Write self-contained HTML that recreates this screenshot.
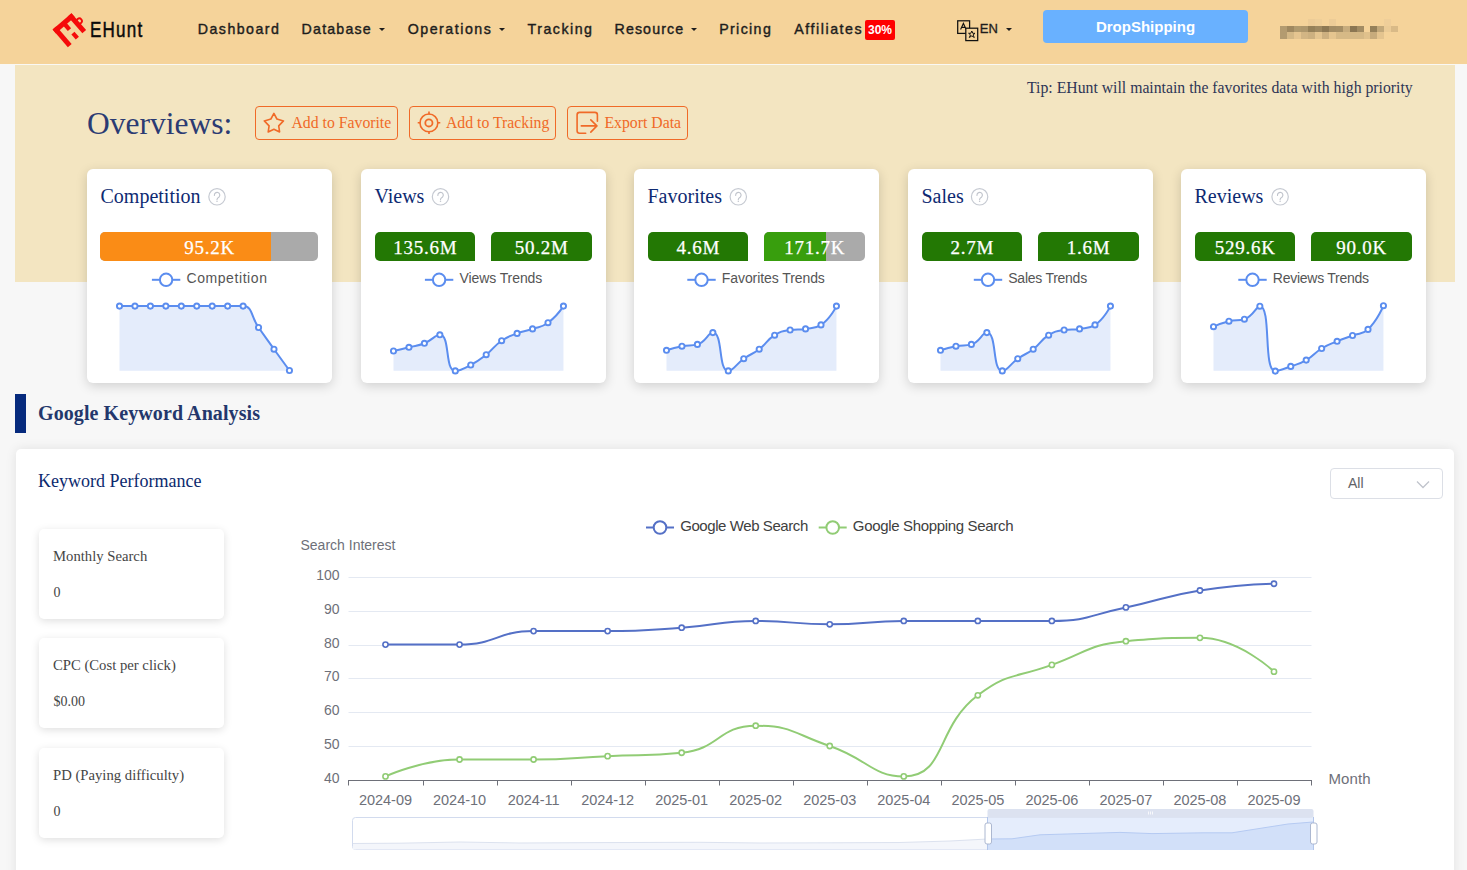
<!DOCTYPE html><html><head><meta charset="utf-8"><style>
html,body{margin:0;padding:0;}
body{width:1467px;height:870px;overflow:hidden;position:relative;background:#F7F7F7;font-family:"Liberation Sans",sans-serif;}
.t{position:absolute;white-space:nowrap;line-height:1;}
</style></head><body>
<div style="position:absolute;left:0px;top:0px;width:1467px;height:64px;background:#F5D39A;"></div>
<div style="position:absolute;left:0px;top:64px;width:1467px;height:1px;background:#F9F8F4;"></div>
<div style="position:absolute;left:15px;top:65px;width:1440px;height:217px;background:#F3E5C1;"></div>
<svg style="position:absolute;left:0;top:0" width="160" height="60">
<g transform="matrix(0.756,-0.655,0.655,0.756,52.6,29.6)" fill="#F50A0A">
<rect x="0" y="0" width="25" height="5"/>
<rect x="20" y="0" width="5" height="22.3"/>
<rect x="0" y="0" width="5" height="23.3"/>
<rect x="10.6" y="4" width="4.3" height="7"/>
<rect x="11" y="16" width="4.1" height="6.7"/>
<circle cx="25.8" cy="11" r="2.6" fill="none" stroke="#F50A0A" stroke-width="1.8"/>
</g>
</svg>
<div class="t" style="left:90.20px;top:19.34px;font-size:22.4px;font-family:'Liberation Sans', sans-serif;color:#0a0a0a;font-weight:normal;letter-spacing:1.6px;transform:scaleX(0.76);transform-origin:0 0;-webkit-text-stroke:0.5px #0a0a0a;">EHunt</div>
<div class="t" style="left:197.80px;top:21.88px;font-size:14.2px;font-family:'Liberation Sans', sans-serif;color:#1d1d1d;font-weight:normal;letter-spacing:1.45px;-webkit-text-stroke:0.4px #1d1d1d;">Dashboard</div>
<div class="t" style="left:301.60px;top:21.88px;font-size:14.2px;font-family:'Liberation Sans', sans-serif;color:#1d1d1d;font-weight:normal;letter-spacing:1.2px;-webkit-text-stroke:0.4px #1d1d1d;">Database</div>
<div class="t" style="left:407.70px;top:21.88px;font-size:14.2px;font-family:'Liberation Sans', sans-serif;color:#1d1d1d;font-weight:normal;letter-spacing:1.53px;-webkit-text-stroke:0.4px #1d1d1d;">Operations</div>
<div class="t" style="left:527.60px;top:21.88px;font-size:14.2px;font-family:'Liberation Sans', sans-serif;color:#1d1d1d;font-weight:normal;letter-spacing:1.49px;-webkit-text-stroke:0.4px #1d1d1d;">Tracking</div>
<div class="t" style="left:614.50px;top:21.88px;font-size:14.2px;font-family:'Liberation Sans', sans-serif;color:#1d1d1d;font-weight:normal;letter-spacing:1.13px;-webkit-text-stroke:0.4px #1d1d1d;">Resource</div>
<div class="t" style="left:719.20px;top:21.88px;font-size:14.2px;font-family:'Liberation Sans', sans-serif;color:#1d1d1d;font-weight:normal;letter-spacing:1.37px;-webkit-text-stroke:0.4px #1d1d1d;">Pricing</div>
<div class="t" style="left:794.30px;top:21.88px;font-size:14.2px;font-family:'Liberation Sans', sans-serif;color:#1d1d1d;font-weight:normal;letter-spacing:1.55px;-webkit-text-stroke:0.4px #1d1d1d;">Affiliates</div>
<div style="position:absolute;left:379px;top:28px;width:0;height:0;border-left:3px solid transparent;border-right:3px solid transparent;border-top:3px solid #1d1d1d;"></div>
<div style="position:absolute;left:499px;top:28px;width:0;height:0;border-left:3px solid transparent;border-right:3px solid transparent;border-top:3px solid #1d1d1d;"></div>
<div style="position:absolute;left:691px;top:28px;width:0;height:0;border-left:3px solid transparent;border-right:3px solid transparent;border-top:3px solid #1d1d1d;"></div>
<div style="position:absolute;left:1006px;top:28px;width:0;height:0;border-left:3px solid transparent;border-right:3px solid transparent;border-top:3px solid #1d1d1d;"></div>
<div style="position:absolute;left:865px;top:20px;width:30px;height:19.5px;background:#F00;border-radius:2px;"></div>
<div class="t" style="left:580.00px;width:600px;text-align:center;top:24.14px;font-size:12px;font-family:'Liberation Sans', sans-serif;color:#fff;font-weight:bold;letter-spacing:0px;">30%</div>
<svg style="position:absolute;left:950px;top:15px" width="32" height="30">
<rect x="7.7" y="5.8" width="11.9" height="12.6" fill="none" stroke="#111" stroke-width="1.25"/>
<path d="M10.6,14.6 L13.4,8.4 L16.2,14.6 M11.6,12.4 H15.2" fill="none" stroke="#111" stroke-width="1.1"/>
<rect x="15.8" y="13.2" width="11.9" height="12.4" fill="#F5D39A" stroke="#111" stroke-width="1.25"/>
<path d="M21.8,16 L22.8,18.3 L25,18.3 L23.1,19.9 L24.3,22.5 L21.8,20.9 L19.3,22.5 L20.5,19.9 L18.6,18.3 L20.8,18.3 Z" fill="none" stroke="#111" stroke-width="1"/>
</svg>
<div class="t" style="left:979.80px;top:22.40px;font-size:13px;font-family:'Liberation Sans', sans-serif;color:#1d1d1d;font-weight:normal;letter-spacing:0px;-webkit-text-stroke:0.3px #1d1d1d;">EN</div>
<div style="position:absolute;left:1043px;top:10px;width:205px;height:33px;background:#69B1FF;border-radius:4px;"></div>
<div class="t" style="left:845.50px;width:600px;text-align:center;top:18.80px;font-size:15px;font-family:'Liberation Sans', sans-serif;color:#fff;font-weight:bold;letter-spacing:0px;">DropShipping</div>
<div style="position:absolute;left:1307.84px;top:19.0px;width:7px;height:6.75px;background:#EDCC97;"></div>
<div style="position:absolute;left:1314.8px;top:19.0px;width:7px;height:6.75px;background:#EFCF99;"></div>
<div style="position:absolute;left:1328.72px;top:19.0px;width:7px;height:6.75px;background:#EDCC97;"></div>
<div style="position:absolute;left:1384.4px;top:19.0px;width:7px;height:6.75px;background:#EFCE99;"></div>
<div style="position:absolute;left:1280.0px;top:25.68px;width:7px;height:6.75px;background:#B39B70;"></div>
<div style="position:absolute;left:1286.96px;top:25.68px;width:7px;height:6.75px;background:#9F8860;"></div>
<div style="position:absolute;left:1293.92px;top:25.68px;width:7px;height:6.75px;background:#B09A6E;"></div>
<div style="position:absolute;left:1300.88px;top:25.68px;width:7px;height:6.75px;background:#AE976C;"></div>
<div style="position:absolute;left:1307.84px;top:25.68px;width:7px;height:6.75px;background:#958058;"></div>
<div style="position:absolute;left:1314.8px;top:25.68px;width:7px;height:6.75px;background:#9E8860;"></div>
<div style="position:absolute;left:1321.76px;top:25.68px;width:7px;height:6.75px;background:#8D7853;"></div>
<div style="position:absolute;left:1328.72px;top:25.68px;width:7px;height:6.75px;background:#A38C63;"></div>
<div style="position:absolute;left:1335.68px;top:25.68px;width:7px;height:6.75px;background:#A58E65;"></div>
<div style="position:absolute;left:1342.64px;top:25.68px;width:7px;height:6.75px;background:#C7AC7D;"></div>
<div style="position:absolute;left:1349.6px;top:25.68px;width:7px;height:6.75px;background:#8B7652;"></div>
<div style="position:absolute;left:1356.56px;top:25.68px;width:7px;height:6.75px;background:#A38C63;"></div>
<div style="position:absolute;left:1370.48px;top:25.68px;width:7px;height:6.75px;background:#958059;"></div>
<div style="position:absolute;left:1377.44px;top:25.68px;width:7px;height:6.75px;background:#C2A87A;"></div>
<div style="position:absolute;left:1384.4px;top:25.68px;width:7px;height:6.75px;background:#EBCB96;"></div>
<div style="position:absolute;left:1391.36px;top:25.68px;width:7px;height:6.75px;background:#D9BA87;"></div>
<div style="position:absolute;left:1280.0px;top:32.36px;width:7px;height:6.75px;background:#B39B70;"></div>
<div style="position:absolute;left:1286.96px;top:32.36px;width:7px;height:6.75px;background:#D4B886;"></div>
<div style="position:absolute;left:1293.92px;top:32.36px;width:7px;height:6.75px;background:#E5C590;"></div>
<div style="position:absolute;left:1300.88px;top:32.36px;width:7px;height:6.75px;background:#D2B584;"></div>
<div style="position:absolute;left:1307.84px;top:32.36px;width:7px;height:6.75px;background:#CCB080;"></div>
<div style="position:absolute;left:1314.8px;top:32.36px;width:7px;height:6.75px;background:#E4C590;"></div>
<div style="position:absolute;left:1321.76px;top:32.36px;width:7px;height:6.75px;background:#CDB080;"></div>
<div style="position:absolute;left:1328.72px;top:32.36px;width:7px;height:6.75px;background:#E5C58F;"></div>
<div style="position:absolute;left:1335.68px;top:32.36px;width:7px;height:6.75px;background:#D6B986;"></div>
<div style="position:absolute;left:1342.64px;top:32.36px;width:7px;height:6.75px;background:#D6B986;"></div>
<div style="position:absolute;left:1349.6px;top:32.36px;width:7px;height:6.75px;background:#D6B986;"></div>
<div style="position:absolute;left:1356.56px;top:32.36px;width:7px;height:6.75px;background:#D6B986;"></div>
<div style="position:absolute;left:1363.52px;top:32.36px;width:7px;height:6.75px;background:#E0C18C;"></div>
<div style="position:absolute;left:1370.48px;top:32.36px;width:7px;height:6.75px;background:#C7AB7C;"></div>
<div style="position:absolute;left:1377.44px;top:32.36px;width:7px;height:6.75px;background:#E4C48F;"></div>
<div class="t" style="left:87.00px;top:107.92px;font-size:31.5px;font-family:'Liberation Serif', serif;color:#2B3B73;font-weight:normal;letter-spacing:0px;">Overviews:</div>
<div style="position:absolute;left:255px;top:106px;width:141px;height:32px;border:1px solid #F06A28;border-radius:4px;"></div>
<div class="t" style="left:291.50px;top:115.41px;font-size:15.75px;font-family:'Liberation Serif', serif;color:#F06A28;font-weight:normal;letter-spacing:0px;">Add to Favorite</div>
<div style="position:absolute;left:409px;top:106px;width:145px;height:32px;border:1px solid #F06A28;border-radius:4px;"></div>
<div class="t" style="left:446.00px;top:115.41px;font-size:15.75px;font-family:'Liberation Serif', serif;color:#F06A28;font-weight:normal;letter-spacing:0px;">Add to Tracking</div>
<div style="position:absolute;left:567px;top:106px;width:119px;height:32px;border:1px solid #F06A28;border-radius:4px;"></div>
<div class="t" style="left:604.50px;top:115.41px;font-size:15.75px;font-family:'Liberation Serif', serif;color:#F06A28;font-weight:normal;letter-spacing:0px;">Export Data</div>
<svg style="position:absolute;left:0;top:0" width="700" height="150" fill="none" stroke="#F06A28" stroke-width="1.6" stroke-linejoin="round">
<path d="M273.9,113.4 L276.9,119 L283.5,120.9 L278.7,125.9 L279.6,131.9 L273.9,129.3 L268.2,131.9 L269.1,125.9 L264.3,120.9 L270.9,119 Z"/>
<circle cx="428.9" cy="122.9" r="8.9"/>
<circle cx="428.9" cy="122.9" r="3.6" stroke-width="1.8"/>
<path d="M429,111.5 V114.4 M429,131.2 V134.1 M417.7,122.8 H420.6 M437.4,122.8 H440.3"/>
<path d="M585.7,133.3 H579.6 A2.5,2.5 0 0 1 577.1,130.8 V114.9 A2.5,2.5 0 0 1 579.6,112.4 H594.9 A2.5,2.5 0 0 1 597.4,114.9 V121.3" stroke-linecap="round"/>
<path d="M581.3,125.9 H597 M590.8,119.9 L596.9,125.9 L590.8,132.1" stroke-linecap="round"/>
</svg>
<div class="t" style="left:1027.00px;top:80.21px;font-size:15.75px;font-family:'Liberation Serif', serif;color:#2E3556;font-weight:normal;letter-spacing:0px;">Tip: EHunt will maintain the favorites data with high priority</div>
<div style="position:absolute;left:87.0px;top:169px;width:245px;height:214px;background:#fff;border-radius:6px;box-shadow:0 3px 12px rgba(0,0,0,0.16);"></div>
<div class="t" style="left:100.50px;top:186.45px;font-size:20px;font-family:'Liberation Serif', serif;color:#0E2A72;font-weight:normal;letter-spacing:0px;">Competition</div>
<div style="position:absolute;left:100.3px;top:232px;width:218px;height:29px;background:#AAAAAA;border-radius:5px;overflow:hidden;"><div style="width:78.5%;height:100%;background:#FA8C16;"></div></div>
<div class="t" style="left:-90.35px;width:600px;text-align:center;top:237.89px;font-size:19px;font-family:'Liberation Serif', serif;color:#fff;font-weight:normal;letter-spacing:0.75px;-webkit-text-stroke:0.25px #fff;">95.2K</div>
<div class="t" style="left:186.45px;top:270.95px;font-size:14px;font-family:'Liberation Sans', sans-serif;color:#555;font-weight:normal;letter-spacing:0.58px;">Competition</div>
<div style="position:absolute;left:361.0px;top:169px;width:245px;height:214px;background:#fff;border-radius:6px;box-shadow:0 3px 12px rgba(0,0,0,0.16);"></div>
<div class="t" style="left:374.50px;top:186.45px;font-size:20px;font-family:'Liberation Serif', serif;color:#0E2A72;font-weight:normal;letter-spacing:0px;">Views</div>
<div style="position:absolute;left:374.6px;top:232px;width:100.8px;height:29px;background:#237804;border-radius:5px 5px 0 5px;"></div>
<div class="t" style="left:125.35px;width:600px;text-align:center;top:237.89px;font-size:19px;font-family:'Liberation Serif', serif;color:#fff;font-weight:normal;letter-spacing:0.75px;-webkit-text-stroke:0.25px #fff;">135.6M</div>
<div style="position:absolute;left:490.9px;top:232px;width:100.8px;height:29px;background:#237804;border-radius:5px 5px 5px 0;"></div>
<div class="t" style="left:241.65px;width:600px;text-align:center;top:237.89px;font-size:19px;font-family:'Liberation Serif', serif;color:#fff;font-weight:normal;letter-spacing:0.75px;-webkit-text-stroke:0.25px #fff;">50.2M</div>
<div class="t" style="left:459.40px;top:270.95px;font-size:14px;font-family:'Liberation Sans', sans-serif;color:#555;font-weight:normal;letter-spacing:-0.08px;">Views Trends</div>
<div style="position:absolute;left:634.0px;top:169px;width:245px;height:214px;background:#fff;border-radius:6px;box-shadow:0 3px 12px rgba(0,0,0,0.16);"></div>
<div class="t" style="left:647.50px;top:186.45px;font-size:20px;font-family:'Liberation Serif', serif;color:#0E2A72;font-weight:normal;letter-spacing:0px;">Favorites</div>
<div style="position:absolute;left:647.6px;top:232px;width:100.8px;height:29px;background:#237804;border-radius:5px 5px 0 5px;"></div>
<div class="t" style="left:398.35px;width:600px;text-align:center;top:237.89px;font-size:19px;font-family:'Liberation Serif', serif;color:#fff;font-weight:normal;letter-spacing:0.75px;-webkit-text-stroke:0.25px #fff;">4.6M</div>
<div style="position:absolute;left:763.9px;top:232px;width:100.8px;height:29px;background:#AAAAAA;border-radius:5px 5px 5px 0;overflow:hidden;"><div style="width:62.0%;height:100%;background:#389E0D;"></div></div>
<div class="t" style="left:514.65px;width:600px;text-align:center;top:237.89px;font-size:19px;font-family:'Liberation Serif', serif;color:#fff;font-weight:normal;letter-spacing:0.75px;-webkit-text-stroke:0.25px #fff;">171.7K</div>
<div class="t" style="left:721.80px;top:270.95px;font-size:14px;font-family:'Liberation Sans', sans-serif;color:#555;font-weight:normal;letter-spacing:-0.08px;">Favorites Trends</div>
<div style="position:absolute;left:908.0px;top:169px;width:245px;height:214px;background:#fff;border-radius:6px;box-shadow:0 3px 12px rgba(0,0,0,0.16);"></div>
<div class="t" style="left:921.50px;top:186.45px;font-size:20px;font-family:'Liberation Serif', serif;color:#0E2A72;font-weight:normal;letter-spacing:0px;">Sales</div>
<div style="position:absolute;left:921.6px;top:232px;width:100.8px;height:29px;background:#237804;border-radius:5px 5px 0 5px;"></div>
<div class="t" style="left:672.35px;width:600px;text-align:center;top:237.89px;font-size:19px;font-family:'Liberation Serif', serif;color:#fff;font-weight:normal;letter-spacing:0.75px;-webkit-text-stroke:0.25px #fff;">2.7M</div>
<div style="position:absolute;left:1037.9px;top:232px;width:100.8px;height:29px;background:#237804;border-radius:5px 5px 5px 0;"></div>
<div class="t" style="left:788.65px;width:600px;text-align:center;top:237.89px;font-size:19px;font-family:'Liberation Serif', serif;color:#fff;font-weight:normal;letter-spacing:0.75px;-webkit-text-stroke:0.25px #fff;">1.6M</div>
<div class="t" style="left:1008.30px;top:270.95px;font-size:14px;font-family:'Liberation Sans', sans-serif;color:#555;font-weight:normal;letter-spacing:-0.26px;">Sales Trends</div>
<div style="position:absolute;left:1181.0px;top:169px;width:245px;height:214px;background:#fff;border-radius:6px;box-shadow:0 3px 12px rgba(0,0,0,0.16);"></div>
<div class="t" style="left:1194.50px;top:186.45px;font-size:20px;font-family:'Liberation Serif', serif;color:#0E2A72;font-weight:normal;letter-spacing:0px;">Reviews</div>
<div style="position:absolute;left:1194.6px;top:232px;width:100.8px;height:29px;background:#237804;border-radius:5px 5px 0 5px;"></div>
<div class="t" style="left:945.35px;width:600px;text-align:center;top:237.89px;font-size:19px;font-family:'Liberation Serif', serif;color:#fff;font-weight:normal;letter-spacing:0.75px;-webkit-text-stroke:0.25px #fff;">529.6K</div>
<div style="position:absolute;left:1310.9px;top:232px;width:100.8px;height:29px;background:#237804;border-radius:5px 5px 5px 0;"></div>
<div class="t" style="left:1061.65px;width:600px;text-align:center;top:237.89px;font-size:19px;font-family:'Liberation Serif', serif;color:#fff;font-weight:normal;letter-spacing:0.75px;-webkit-text-stroke:0.25px #fff;">90.0K</div>
<div class="t" style="left:1272.80px;top:270.95px;font-size:14px;font-family:'Liberation Sans', sans-serif;color:#555;font-weight:normal;letter-spacing:-0.26px;">Reviews Trends</div>
<div style="position:absolute;left:15px;top:394px;width:11px;height:38.5px;background:#062A7D;"></div>
<div class="t" style="left:38.00px;top:403.25px;font-size:20px;font-family:'Liberation Serif', serif;color:#24376C;font-weight:bold;letter-spacing:0.09px;">Google Keyword Analysis</div>
<div style="position:absolute;left:16px;top:449px;width:1438px;height:440px;background:#fff;border-radius:5px;box-shadow:0 0 12px rgba(0,0,0,0.09);"></div>
<div class="t" style="left:38.00px;top:471.62px;font-size:18px;font-family:'Liberation Serif', serif;color:#0C2A6E;font-weight:normal;letter-spacing:0px;">Keyword Performance</div>
<div style="position:absolute;left:1330px;top:468px;width:111px;height:29px;border:1px solid #DCDFE6;border-radius:4px;background:#fff;"></div>
<div class="t" style="left:1348.00px;top:476.15px;font-size:14px;font-family:'Liberation Sans', sans-serif;color:#606266;font-weight:normal;letter-spacing:0px;">All</div>
<div style="position:absolute;left:39px;top:529px;width:185px;height:90px;background:#fff;border-radius:5px;box-shadow:0 2px 8px rgba(0,0,0,0.13);"></div>
<div class="t" style="left:53.00px;top:548.89px;font-size:14.7px;font-family:'Liberation Serif', serif;color:#454545;font-weight:normal;letter-spacing:0px;">Monthly Search</div>
<div class="t" style="left:53.50px;top:585.88px;font-size:14px;font-family:'Liberation Serif', serif;color:#454545;font-weight:normal;letter-spacing:0px;">0</div>
<div style="position:absolute;left:39px;top:638px;width:185px;height:90px;background:#fff;border-radius:5px;box-shadow:0 2px 8px rgba(0,0,0,0.13);"></div>
<div class="t" style="left:53.00px;top:657.89px;font-size:14.7px;font-family:'Liberation Serif', serif;color:#454545;font-weight:normal;letter-spacing:0px;">CPC (Cost per click)</div>
<div class="t" style="left:53.50px;top:694.88px;font-size:14px;font-family:'Liberation Serif', serif;color:#454545;font-weight:normal;letter-spacing:0px;">$0.00</div>
<div style="position:absolute;left:39px;top:748px;width:185px;height:90px;background:#fff;border-radius:5px;box-shadow:0 2px 8px rgba(0,0,0,0.13);"></div>
<div class="t" style="left:53.00px;top:767.89px;font-size:14.7px;font-family:'Liberation Serif', serif;color:#454545;font-weight:normal;letter-spacing:0px;">PD (Paying difficulty)</div>
<div class="t" style="left:53.50px;top:804.88px;font-size:14px;font-family:'Liberation Serif', serif;color:#454545;font-weight:normal;letter-spacing:0px;">0</div>
<div class="t" style="left:300.50px;top:538.35px;font-size:14px;font-family:'Liberation Sans', sans-serif;color:#6E7079;font-weight:normal;letter-spacing:0px;">Search Interest</div>
<div class="t" style="left:239.5px;width:100px;text-align:right;top:568.05px;font-size:14px;color:#6E7079;">100</div>
<div class="t" style="left:239.5px;width:100px;text-align:right;top:601.85px;font-size:14px;color:#6E7079;">90</div>
<div class="t" style="left:239.5px;width:100px;text-align:right;top:635.65px;font-size:14px;color:#6E7079;">80</div>
<div class="t" style="left:239.5px;width:100px;text-align:right;top:669.45px;font-size:14px;color:#6E7079;">70</div>
<div class="t" style="left:239.5px;width:100px;text-align:right;top:703.25px;font-size:14px;color:#6E7079;">60</div>
<div class="t" style="left:239.5px;width:100px;text-align:right;top:737.05px;font-size:14px;color:#6E7079;">50</div>
<div class="t" style="left:239.5px;width:100px;text-align:right;top:770.85px;font-size:14px;color:#6E7079;">40</div>
<div class="t" style="left:85.50px;width:600px;text-align:center;top:793.43px;font-size:14.5px;font-family:'Liberation Sans', sans-serif;color:#6E7079;font-weight:normal;letter-spacing:-0.05px;">2024-09</div>
<div class="t" style="left:159.54px;width:600px;text-align:center;top:793.43px;font-size:14.5px;font-family:'Liberation Sans', sans-serif;color:#6E7079;font-weight:normal;letter-spacing:-0.05px;">2024-10</div>
<div class="t" style="left:233.58px;width:600px;text-align:center;top:793.43px;font-size:14.5px;font-family:'Liberation Sans', sans-serif;color:#6E7079;font-weight:normal;letter-spacing:-0.05px;">2024-11</div>
<div class="t" style="left:307.62px;width:600px;text-align:center;top:793.43px;font-size:14.5px;font-family:'Liberation Sans', sans-serif;color:#6E7079;font-weight:normal;letter-spacing:-0.05px;">2024-12</div>
<div class="t" style="left:381.66px;width:600px;text-align:center;top:793.43px;font-size:14.5px;font-family:'Liberation Sans', sans-serif;color:#6E7079;font-weight:normal;letter-spacing:-0.05px;">2025-01</div>
<div class="t" style="left:455.70px;width:600px;text-align:center;top:793.43px;font-size:14.5px;font-family:'Liberation Sans', sans-serif;color:#6E7079;font-weight:normal;letter-spacing:-0.05px;">2025-02</div>
<div class="t" style="left:529.74px;width:600px;text-align:center;top:793.43px;font-size:14.5px;font-family:'Liberation Sans', sans-serif;color:#6E7079;font-weight:normal;letter-spacing:-0.05px;">2025-03</div>
<div class="t" style="left:603.78px;width:600px;text-align:center;top:793.43px;font-size:14.5px;font-family:'Liberation Sans', sans-serif;color:#6E7079;font-weight:normal;letter-spacing:-0.05px;">2025-04</div>
<div class="t" style="left:677.82px;width:600px;text-align:center;top:793.43px;font-size:14.5px;font-family:'Liberation Sans', sans-serif;color:#6E7079;font-weight:normal;letter-spacing:-0.05px;">2025-05</div>
<div class="t" style="left:751.86px;width:600px;text-align:center;top:793.43px;font-size:14.5px;font-family:'Liberation Sans', sans-serif;color:#6E7079;font-weight:normal;letter-spacing:-0.05px;">2025-06</div>
<div class="t" style="left:825.90px;width:600px;text-align:center;top:793.43px;font-size:14.5px;font-family:'Liberation Sans', sans-serif;color:#6E7079;font-weight:normal;letter-spacing:-0.05px;">2025-07</div>
<div class="t" style="left:899.94px;width:600px;text-align:center;top:793.43px;font-size:14.5px;font-family:'Liberation Sans', sans-serif;color:#6E7079;font-weight:normal;letter-spacing:-0.05px;">2025-08</div>
<div class="t" style="left:973.98px;width:600px;text-align:center;top:793.43px;font-size:14.5px;font-family:'Liberation Sans', sans-serif;color:#6E7079;font-weight:normal;letter-spacing:-0.05px;">2025-09</div>
<div class="t" style="left:1328.50px;top:770.60px;font-size:15px;font-family:'Liberation Sans', sans-serif;color:#6E7079;font-weight:normal;letter-spacing:0.1px;">Month</div>
<div class="t" style="left:680.20px;top:518.20px;font-size:15px;font-family:'Liberation Sans', sans-serif;color:#404040;font-weight:normal;letter-spacing:-0.42px;">Google Web Search</div>
<div class="t" style="left:852.80px;top:518.20px;font-size:15px;font-family:'Liberation Sans', sans-serif;color:#404040;font-weight:normal;letter-spacing:-0.33px;">Google Shopping Search</div>
<svg style="position:absolute;left:0;top:0;pointer-events:none" width="1467" height="870"><circle cx="217.0" cy="196.8" r="8.2" fill="none" stroke="#C6CAD2" stroke-width="1.2"/>
<path d="M214.40,195.4 A2.7,2.7 0 1 1 219.10,196.9 Q217.00,198.2 217.00,199.4" fill="none" stroke="#C0C4CC" stroke-width="1.15" stroke-linecap="round"/>
<circle cx="217.00" cy="201.3" r="0.75" fill="#C0C4CC"/>
<line x1="151.9" y1="279.8" x2="180.3" y2="279.8" stroke="#5B8DEF" stroke-width="2"/>
<circle cx="166.1" cy="279.8" r="6.2" fill="#fff" stroke="#5B8DEF" stroke-width="2"/>
<path d="M119.50,306.10 C119.50,306.10 127.22,306.10 134.95,306.10 C142.68,306.10 142.68,306.10 150.40,306.10 C158.12,306.10 158.12,306.10 165.85,306.10 C173.57,306.10 173.57,306.10 181.30,306.10 C189.03,306.10 189.03,306.10 196.75,306.10 C204.47,306.10 204.47,306.10 212.20,306.10 C219.92,306.10 219.92,306.10 227.65,306.10 C235.38,306.10 237.40,306.10 243.10,306.10 C252.85,306.10 250.86,316.77 258.55,327.50 C266.31,338.32 266.23,338.38 274.00,349.20 C281.68,359.88 289.45,370.50 289.45,370.50 L289.45,370.7 L119.50,370.7 Z" fill="#E4ECFB"/>
<path d="M119.50,306.10 C119.50,306.10 127.22,306.10 134.95,306.10 C142.68,306.10 142.68,306.10 150.40,306.10 C158.12,306.10 158.12,306.10 165.85,306.10 C173.57,306.10 173.57,306.10 181.30,306.10 C189.03,306.10 189.03,306.10 196.75,306.10 C204.47,306.10 204.47,306.10 212.20,306.10 C219.92,306.10 219.92,306.10 227.65,306.10 C235.38,306.10 237.40,306.10 243.10,306.10 C252.85,306.10 250.86,316.77 258.55,327.50 C266.31,338.32 266.23,338.38 274.00,349.20 C281.68,359.88 289.45,370.50 289.45,370.50" fill="none" stroke="#5B8DEF" stroke-width="2"/>
<circle cx="119.50" cy="306.10" r="2.6" fill="#fff" stroke="#5B8DEF" stroke-width="1.9"/>
<circle cx="134.95" cy="306.10" r="2.6" fill="#fff" stroke="#5B8DEF" stroke-width="1.9"/>
<circle cx="150.40" cy="306.10" r="2.6" fill="#fff" stroke="#5B8DEF" stroke-width="1.9"/>
<circle cx="165.85" cy="306.10" r="2.6" fill="#fff" stroke="#5B8DEF" stroke-width="1.9"/>
<circle cx="181.30" cy="306.10" r="2.6" fill="#fff" stroke="#5B8DEF" stroke-width="1.9"/>
<circle cx="196.75" cy="306.10" r="2.6" fill="#fff" stroke="#5B8DEF" stroke-width="1.9"/>
<circle cx="212.20" cy="306.10" r="2.6" fill="#fff" stroke="#5B8DEF" stroke-width="1.9"/>
<circle cx="227.65" cy="306.10" r="2.6" fill="#fff" stroke="#5B8DEF" stroke-width="1.9"/>
<circle cx="243.10" cy="306.10" r="2.6" fill="#fff" stroke="#5B8DEF" stroke-width="1.9"/>
<circle cx="258.55" cy="327.50" r="2.6" fill="#fff" stroke="#5B8DEF" stroke-width="1.9"/>
<circle cx="274.00" cy="349.20" r="2.6" fill="#fff" stroke="#5B8DEF" stroke-width="1.9"/>
<circle cx="289.45" cy="370.50" r="2.6" fill="#fff" stroke="#5B8DEF" stroke-width="1.9"/>
<circle cx="440.5" cy="196.8" r="8.2" fill="none" stroke="#C6CAD2" stroke-width="1.2"/>
<path d="M437.90,195.4 A2.7,2.7 0 1 1 442.60,196.9 Q440.50,198.2 440.50,199.4" fill="none" stroke="#C0C4CC" stroke-width="1.15" stroke-linecap="round"/>
<circle cx="440.50" cy="201.3" r="0.75" fill="#C0C4CC"/>
<line x1="424.9" y1="279.8" x2="453.3" y2="279.8" stroke="#5B8DEF" stroke-width="2"/>
<circle cx="439.1" cy="279.8" r="6.2" fill="#fff" stroke="#5B8DEF" stroke-width="2"/>
<path d="M393.50,351.00 C393.50,351.00 401.24,349.22 408.95,347.30 C416.69,345.37 417.06,346.27 424.40,343.30 C432.51,340.02 435.06,334.80 439.85,334.80 C450.51,334.80 444.43,370.90 455.30,370.90 C459.88,370.90 463.47,368.82 470.75,365.00 C478.92,360.72 478.92,360.42 486.20,354.70 C494.37,348.27 493.16,346.55 501.65,340.70 C508.61,335.90 509.14,336.44 517.10,333.40 C524.59,330.54 524.96,331.53 532.55,328.90 C540.41,326.18 541.46,327.53 548.00,322.70 C556.91,316.13 563.45,306.10 563.45,306.10 L563.45,370.7 L393.50,370.7 Z" fill="#E4ECFB"/>
<path d="M393.50,351.00 C393.50,351.00 401.24,349.22 408.95,347.30 C416.69,345.37 417.06,346.27 424.40,343.30 C432.51,340.02 435.06,334.80 439.85,334.80 C450.51,334.80 444.43,370.90 455.30,370.90 C459.88,370.90 463.47,368.82 470.75,365.00 C478.92,360.72 478.92,360.42 486.20,354.70 C494.37,348.27 493.16,346.55 501.65,340.70 C508.61,335.90 509.14,336.44 517.10,333.40 C524.59,330.54 524.96,331.53 532.55,328.90 C540.41,326.18 541.46,327.53 548.00,322.70 C556.91,316.13 563.45,306.10 563.45,306.10" fill="none" stroke="#5B8DEF" stroke-width="2"/>
<circle cx="393.50" cy="351.00" r="2.6" fill="#fff" stroke="#5B8DEF" stroke-width="1.9"/>
<circle cx="408.95" cy="347.30" r="2.6" fill="#fff" stroke="#5B8DEF" stroke-width="1.9"/>
<circle cx="424.40" cy="343.30" r="2.6" fill="#fff" stroke="#5B8DEF" stroke-width="1.9"/>
<circle cx="439.85" cy="334.80" r="2.6" fill="#fff" stroke="#5B8DEF" stroke-width="1.9"/>
<circle cx="455.30" cy="370.90" r="2.6" fill="#fff" stroke="#5B8DEF" stroke-width="1.9"/>
<circle cx="470.75" cy="365.00" r="2.6" fill="#fff" stroke="#5B8DEF" stroke-width="1.9"/>
<circle cx="486.20" cy="354.70" r="2.6" fill="#fff" stroke="#5B8DEF" stroke-width="1.9"/>
<circle cx="501.65" cy="340.70" r="2.6" fill="#fff" stroke="#5B8DEF" stroke-width="1.9"/>
<circle cx="517.10" cy="333.40" r="2.6" fill="#fff" stroke="#5B8DEF" stroke-width="1.9"/>
<circle cx="532.55" cy="328.90" r="2.6" fill="#fff" stroke="#5B8DEF" stroke-width="1.9"/>
<circle cx="548.00" cy="322.70" r="2.6" fill="#fff" stroke="#5B8DEF" stroke-width="1.9"/>
<circle cx="563.45" cy="306.10" r="2.6" fill="#fff" stroke="#5B8DEF" stroke-width="1.9"/>
<circle cx="738.3" cy="196.8" r="8.2" fill="none" stroke="#C6CAD2" stroke-width="1.2"/>
<path d="M735.70,195.4 A2.7,2.7 0 1 1 740.40,196.9 Q738.30,198.2 738.30,199.4" fill="none" stroke="#C0C4CC" stroke-width="1.15" stroke-linecap="round"/>
<circle cx="738.30" cy="201.3" r="0.75" fill="#C0C4CC"/>
<line x1="687.3" y1="279.8" x2="715.7" y2="279.8" stroke="#5B8DEF" stroke-width="2"/>
<circle cx="701.5" cy="279.8" r="6.2" fill="#fff" stroke="#5B8DEF" stroke-width="2"/>
<path d="M666.50,350.30 C666.50,350.30 674.12,347.70 681.95,346.20 C689.57,344.75 690.53,346.20 697.40,344.40 C705.98,342.15 707.90,332.60 712.85,332.60 C723.35,332.60 717.84,370.90 728.30,370.90 C733.29,370.90 735.71,364.35 743.75,358.70 C751.16,353.50 752.01,354.67 759.20,349.20 C767.46,342.92 765.98,340.59 774.65,335.20 C781.43,330.99 782.18,331.16 790.10,330.00 C797.63,328.90 797.94,330.00 805.55,328.90 C813.39,327.77 814.88,328.90 821.00,324.90 C830.33,318.80 836.45,306.10 836.45,306.10 L836.45,370.7 L666.50,370.7 Z" fill="#E4ECFB"/>
<path d="M666.50,350.30 C666.50,350.30 674.12,347.70 681.95,346.20 C689.57,344.75 690.53,346.20 697.40,344.40 C705.98,342.15 707.90,332.60 712.85,332.60 C723.35,332.60 717.84,370.90 728.30,370.90 C733.29,370.90 735.71,364.35 743.75,358.70 C751.16,353.50 752.01,354.67 759.20,349.20 C767.46,342.92 765.98,340.59 774.65,335.20 C781.43,330.99 782.18,331.16 790.10,330.00 C797.63,328.90 797.94,330.00 805.55,328.90 C813.39,327.77 814.88,328.90 821.00,324.90 C830.33,318.80 836.45,306.10 836.45,306.10" fill="none" stroke="#5B8DEF" stroke-width="2"/>
<circle cx="666.50" cy="350.30" r="2.6" fill="#fff" stroke="#5B8DEF" stroke-width="1.9"/>
<circle cx="681.95" cy="346.20" r="2.6" fill="#fff" stroke="#5B8DEF" stroke-width="1.9"/>
<circle cx="697.40" cy="344.40" r="2.6" fill="#fff" stroke="#5B8DEF" stroke-width="1.9"/>
<circle cx="712.85" cy="332.60" r="2.6" fill="#fff" stroke="#5B8DEF" stroke-width="1.9"/>
<circle cx="728.30" cy="370.90" r="2.6" fill="#fff" stroke="#5B8DEF" stroke-width="1.9"/>
<circle cx="743.75" cy="358.70" r="2.6" fill="#fff" stroke="#5B8DEF" stroke-width="1.9"/>
<circle cx="759.20" cy="349.20" r="2.6" fill="#fff" stroke="#5B8DEF" stroke-width="1.9"/>
<circle cx="774.65" cy="335.20" r="2.6" fill="#fff" stroke="#5B8DEF" stroke-width="1.9"/>
<circle cx="790.10" cy="330.00" r="2.6" fill="#fff" stroke="#5B8DEF" stroke-width="1.9"/>
<circle cx="805.55" cy="328.90" r="2.6" fill="#fff" stroke="#5B8DEF" stroke-width="1.9"/>
<circle cx="821.00" cy="324.90" r="2.6" fill="#fff" stroke="#5B8DEF" stroke-width="1.9"/>
<circle cx="836.45" cy="306.10" r="2.6" fill="#fff" stroke="#5B8DEF" stroke-width="1.9"/>
<circle cx="979.6" cy="196.8" r="8.2" fill="none" stroke="#C6CAD2" stroke-width="1.2"/>
<path d="M977.00,195.4 A2.7,2.7 0 1 1 981.70,196.9 Q979.60,198.2 979.60,199.4" fill="none" stroke="#C0C4CC" stroke-width="1.15" stroke-linecap="round"/>
<circle cx="979.60" cy="201.3" r="0.75" fill="#C0C4CC"/>
<line x1="973.8" y1="279.8" x2="1002.2" y2="279.8" stroke="#5B8DEF" stroke-width="2"/>
<circle cx="988.0" cy="279.8" r="6.2" fill="#fff" stroke="#5B8DEF" stroke-width="2"/>
<path d="M940.50,350.30 C940.50,350.30 948.12,347.70 955.95,346.20 C963.57,344.75 964.53,346.20 971.40,344.40 C979.98,342.15 981.90,332.60 986.85,332.60 C997.35,332.60 991.84,370.90 1002.30,370.90 C1007.29,370.90 1009.71,364.35 1017.75,358.70 C1025.16,353.50 1026.01,354.67 1033.20,349.20 C1041.46,342.92 1039.98,340.59 1048.65,335.20 C1055.43,330.99 1056.18,331.16 1064.10,330.00 C1071.63,328.90 1071.94,330.00 1079.55,328.90 C1087.39,327.77 1088.88,328.90 1095.00,324.90 C1104.33,318.80 1110.45,306.10 1110.45,306.10 L1110.45,370.7 L940.50,370.7 Z" fill="#E4ECFB"/>
<path d="M940.50,350.30 C940.50,350.30 948.12,347.70 955.95,346.20 C963.57,344.75 964.53,346.20 971.40,344.40 C979.98,342.15 981.90,332.60 986.85,332.60 C997.35,332.60 991.84,370.90 1002.30,370.90 C1007.29,370.90 1009.71,364.35 1017.75,358.70 C1025.16,353.50 1026.01,354.67 1033.20,349.20 C1041.46,342.92 1039.98,340.59 1048.65,335.20 C1055.43,330.99 1056.18,331.16 1064.10,330.00 C1071.63,328.90 1071.94,330.00 1079.55,328.90 C1087.39,327.77 1088.88,328.90 1095.00,324.90 C1104.33,318.80 1110.45,306.10 1110.45,306.10" fill="none" stroke="#5B8DEF" stroke-width="2"/>
<circle cx="940.50" cy="350.30" r="2.6" fill="#fff" stroke="#5B8DEF" stroke-width="1.9"/>
<circle cx="955.95" cy="346.20" r="2.6" fill="#fff" stroke="#5B8DEF" stroke-width="1.9"/>
<circle cx="971.40" cy="344.40" r="2.6" fill="#fff" stroke="#5B8DEF" stroke-width="1.9"/>
<circle cx="986.85" cy="332.60" r="2.6" fill="#fff" stroke="#5B8DEF" stroke-width="1.9"/>
<circle cx="1002.30" cy="370.90" r="2.6" fill="#fff" stroke="#5B8DEF" stroke-width="1.9"/>
<circle cx="1017.75" cy="358.70" r="2.6" fill="#fff" stroke="#5B8DEF" stroke-width="1.9"/>
<circle cx="1033.20" cy="349.20" r="2.6" fill="#fff" stroke="#5B8DEF" stroke-width="1.9"/>
<circle cx="1048.65" cy="335.20" r="2.6" fill="#fff" stroke="#5B8DEF" stroke-width="1.9"/>
<circle cx="1064.10" cy="330.00" r="2.6" fill="#fff" stroke="#5B8DEF" stroke-width="1.9"/>
<circle cx="1079.55" cy="328.90" r="2.6" fill="#fff" stroke="#5B8DEF" stroke-width="1.9"/>
<circle cx="1095.00" cy="324.90" r="2.6" fill="#fff" stroke="#5B8DEF" stroke-width="1.9"/>
<circle cx="1110.45" cy="306.10" r="2.6" fill="#fff" stroke="#5B8DEF" stroke-width="1.9"/>
<circle cx="1280.1" cy="196.8" r="8.2" fill="none" stroke="#C6CAD2" stroke-width="1.2"/>
<path d="M1277.50,195.4 A2.7,2.7 0 1 1 1282.20,196.9 Q1280.10,198.2 1280.10,199.4" fill="none" stroke="#C0C4CC" stroke-width="1.15" stroke-linecap="round"/>
<circle cx="1280.10" cy="201.3" r="0.75" fill="#C0C4CC"/>
<line x1="1238.3" y1="279.8" x2="1266.7" y2="279.8" stroke="#5B8DEF" stroke-width="2"/>
<circle cx="1252.5" cy="279.8" r="6.2" fill="#fff" stroke="#5B8DEF" stroke-width="2"/>
<path d="M1213.50,326.70 C1213.50,326.70 1221.03,323.12 1228.95,321.20 C1236.48,319.37 1237.67,321.20 1244.40,319.20 C1253.12,316.61 1256.26,306.20 1259.85,306.20 C1271.71,306.20 1262.86,371.10 1275.30,371.10 C1278.31,371.10 1283.15,369.11 1290.75,366.40 C1298.60,363.61 1299.04,364.25 1306.20,360.10 C1314.49,355.30 1313.44,353.49 1321.65,348.50 C1328.89,344.09 1329.25,344.60 1337.10,341.30 C1344.70,338.10 1344.85,338.47 1352.55,335.50 C1360.30,332.52 1362.28,334.91 1368.00,329.40 C1377.73,320.01 1383.45,305.70 1383.45,305.70 L1383.45,370.7 L1213.50,370.7 Z" fill="#E4ECFB"/>
<path d="M1213.50,326.70 C1213.50,326.70 1221.03,323.12 1228.95,321.20 C1236.48,319.37 1237.67,321.20 1244.40,319.20 C1253.12,316.61 1256.26,306.20 1259.85,306.20 C1271.71,306.20 1262.86,371.10 1275.30,371.10 C1278.31,371.10 1283.15,369.11 1290.75,366.40 C1298.60,363.61 1299.04,364.25 1306.20,360.10 C1314.49,355.30 1313.44,353.49 1321.65,348.50 C1328.89,344.09 1329.25,344.60 1337.10,341.30 C1344.70,338.10 1344.85,338.47 1352.55,335.50 C1360.30,332.52 1362.28,334.91 1368.00,329.40 C1377.73,320.01 1383.45,305.70 1383.45,305.70" fill="none" stroke="#5B8DEF" stroke-width="2"/>
<circle cx="1213.50" cy="326.70" r="2.6" fill="#fff" stroke="#5B8DEF" stroke-width="1.9"/>
<circle cx="1228.95" cy="321.20" r="2.6" fill="#fff" stroke="#5B8DEF" stroke-width="1.9"/>
<circle cx="1244.40" cy="319.20" r="2.6" fill="#fff" stroke="#5B8DEF" stroke-width="1.9"/>
<circle cx="1259.85" cy="306.20" r="2.6" fill="#fff" stroke="#5B8DEF" stroke-width="1.9"/>
<circle cx="1275.30" cy="371.10" r="2.6" fill="#fff" stroke="#5B8DEF" stroke-width="1.9"/>
<circle cx="1290.75" cy="366.40" r="2.6" fill="#fff" stroke="#5B8DEF" stroke-width="1.9"/>
<circle cx="1306.20" cy="360.10" r="2.6" fill="#fff" stroke="#5B8DEF" stroke-width="1.9"/>
<circle cx="1321.65" cy="348.50" r="2.6" fill="#fff" stroke="#5B8DEF" stroke-width="1.9"/>
<circle cx="1337.10" cy="341.30" r="2.6" fill="#fff" stroke="#5B8DEF" stroke-width="1.9"/>
<circle cx="1352.55" cy="335.50" r="2.6" fill="#fff" stroke="#5B8DEF" stroke-width="1.9"/>
<circle cx="1368.00" cy="329.40" r="2.6" fill="#fff" stroke="#5B8DEF" stroke-width="1.9"/>
<circle cx="1383.45" cy="305.70" r="2.6" fill="#fff" stroke="#5B8DEF" stroke-width="1.9"/>
<path d="M1417,481.5 L1423,487.5 L1429,481.5" fill="none" stroke="#C0C4CC" stroke-width="1.3"/>
<line x1="348.5" y1="577.5" x2="1311.5" y2="577.5" stroke="#E4E9F2" stroke-width="1"/>
<line x1="348.5" y1="611.5" x2="1311.5" y2="611.5" stroke="#E4E9F2" stroke-width="1"/>
<line x1="348.5" y1="645.5" x2="1311.5" y2="645.5" stroke="#E4E9F2" stroke-width="1"/>
<line x1="348.5" y1="678.5" x2="1311.5" y2="678.5" stroke="#E4E9F2" stroke-width="1"/>
<line x1="348.5" y1="712.5" x2="1311.5" y2="712.5" stroke="#E4E9F2" stroke-width="1"/>
<line x1="348.5" y1="746.5" x2="1311.5" y2="746.5" stroke="#E4E9F2" stroke-width="1"/>
<line x1="348.5" y1="780.5" x2="1311.5" y2="780.5" stroke="#6E7079" stroke-width="1"/>
<line x1="348.5" y1="780" x2="348.5" y2="785.5" stroke="#6E7079" stroke-width="1"/>
<line x1="423.5" y1="780" x2="423.5" y2="785.5" stroke="#6E7079" stroke-width="1"/>
<line x1="497.5" y1="780" x2="497.5" y2="785.5" stroke="#6E7079" stroke-width="1"/>
<line x1="571.5" y1="780" x2="571.5" y2="785.5" stroke="#6E7079" stroke-width="1"/>
<line x1="645.5" y1="780" x2="645.5" y2="785.5" stroke="#6E7079" stroke-width="1"/>
<line x1="719.5" y1="780" x2="719.5" y2="785.5" stroke="#6E7079" stroke-width="1"/>
<line x1="793.5" y1="780" x2="793.5" y2="785.5" stroke="#6E7079" stroke-width="1"/>
<line x1="867.5" y1="780" x2="867.5" y2="785.5" stroke="#6E7079" stroke-width="1"/>
<line x1="941.5" y1="780" x2="941.5" y2="785.5" stroke="#6E7079" stroke-width="1"/>
<line x1="1015.5" y1="780" x2="1015.5" y2="785.5" stroke="#6E7079" stroke-width="1"/>
<line x1="1089.5" y1="780" x2="1089.5" y2="785.5" stroke="#6E7079" stroke-width="1"/>
<line x1="1163.5" y1="780" x2="1163.5" y2="785.5" stroke="#6E7079" stroke-width="1"/>
<line x1="1237.5" y1="780" x2="1237.5" y2="785.5" stroke="#6E7079" stroke-width="1"/>
<line x1="1311.5" y1="780" x2="1311.5" y2="785.5" stroke="#6E7079" stroke-width="1"/>
<path d="M385.50,644.60 C385.50,644.60 422.82,644.60 459.54,644.60 C496.86,644.60 496.26,631.08 533.58,631.08 C570.30,631.08 570.62,631.08 607.62,631.08 C644.66,631.08 644.70,630.23 681.66,627.70 C718.74,625.16 718.62,620.94 755.70,620.94 C792.66,620.94 792.72,624.32 829.74,624.32 C866.76,624.32 866.74,620.94 903.78,620.94 C940.78,620.94 940.80,620.94 977.82,620.94 C1014.84,620.94 1015.14,620.94 1051.86,620.94 C1089.18,620.94 1089.05,614.99 1125.90,607.42 C1163.09,599.78 1162.53,596.50 1199.94,590.52 C1236.57,584.67 1273.98,583.76 1273.98,583.76" fill="none" stroke="#5470C6" stroke-width="2"/>
<circle cx="385.50" cy="644.60" r="2.6" fill="#fff" stroke="#5470C6" stroke-width="1.6"/>
<circle cx="459.54" cy="644.60" r="2.6" fill="#fff" stroke="#5470C6" stroke-width="1.6"/>
<circle cx="533.58" cy="631.08" r="2.6" fill="#fff" stroke="#5470C6" stroke-width="1.6"/>
<circle cx="607.62" cy="631.08" r="2.6" fill="#fff" stroke="#5470C6" stroke-width="1.6"/>
<circle cx="681.66" cy="627.70" r="2.6" fill="#fff" stroke="#5470C6" stroke-width="1.6"/>
<circle cx="755.70" cy="620.94" r="2.6" fill="#fff" stroke="#5470C6" stroke-width="1.6"/>
<circle cx="829.74" cy="624.32" r="2.6" fill="#fff" stroke="#5470C6" stroke-width="1.6"/>
<circle cx="903.78" cy="620.94" r="2.6" fill="#fff" stroke="#5470C6" stroke-width="1.6"/>
<circle cx="977.82" cy="620.94" r="2.6" fill="#fff" stroke="#5470C6" stroke-width="1.6"/>
<circle cx="1051.86" cy="620.94" r="2.6" fill="#fff" stroke="#5470C6" stroke-width="1.6"/>
<circle cx="1125.90" cy="607.42" r="2.6" fill="#fff" stroke="#5470C6" stroke-width="1.6"/>
<circle cx="1199.94" cy="590.52" r="2.6" fill="#fff" stroke="#5470C6" stroke-width="1.6"/>
<circle cx="1273.98" cy="583.76" r="2.6" fill="#fff" stroke="#5470C6" stroke-width="1.6"/>
<path d="M385.50,776.42 C385.50,776.42 422.05,759.52 459.54,759.52 C496.09,759.52 496.58,759.52 533.58,759.52 C570.62,759.52 570.60,757.83 607.62,756.14 C644.64,754.45 645.78,756.14 681.66,752.76 C719.82,749.17 718.19,725.72 755.70,725.72 C792.23,725.72 793.49,733.59 829.74,746.00 C867.53,758.94 872.57,776.42 903.78,776.42 C946.61,776.42 934.99,727.56 977.82,695.30 C1009.03,671.79 1014.30,678.60 1051.86,664.88 C1088.34,651.56 1088.00,644.76 1125.90,641.22 C1162.04,637.84 1164.65,637.84 1199.94,637.84 C1238.69,637.84 1273.98,671.64 1273.98,671.64" fill="none" stroke="#91CC75" stroke-width="2"/>
<circle cx="385.50" cy="776.42" r="2.6" fill="#fff" stroke="#91CC75" stroke-width="1.6"/>
<circle cx="459.54" cy="759.52" r="2.6" fill="#fff" stroke="#91CC75" stroke-width="1.6"/>
<circle cx="533.58" cy="759.52" r="2.6" fill="#fff" stroke="#91CC75" stroke-width="1.6"/>
<circle cx="607.62" cy="756.14" r="2.6" fill="#fff" stroke="#91CC75" stroke-width="1.6"/>
<circle cx="681.66" cy="752.76" r="2.6" fill="#fff" stroke="#91CC75" stroke-width="1.6"/>
<circle cx="755.70" cy="725.72" r="2.6" fill="#fff" stroke="#91CC75" stroke-width="1.6"/>
<circle cx="829.74" cy="746.00" r="2.6" fill="#fff" stroke="#91CC75" stroke-width="1.6"/>
<circle cx="903.78" cy="776.42" r="2.6" fill="#fff" stroke="#91CC75" stroke-width="1.6"/>
<circle cx="977.82" cy="695.30" r="2.6" fill="#fff" stroke="#91CC75" stroke-width="1.6"/>
<circle cx="1051.86" cy="664.88" r="2.6" fill="#fff" stroke="#91CC75" stroke-width="1.6"/>
<circle cx="1125.90" cy="641.22" r="2.6" fill="#fff" stroke="#91CC75" stroke-width="1.6"/>
<circle cx="1199.94" cy="637.84" r="2.6" fill="#fff" stroke="#91CC75" stroke-width="1.6"/>
<circle cx="1273.98" cy="671.64" r="2.6" fill="#fff" stroke="#91CC75" stroke-width="1.6"/>
<line x1="646" y1="527.5" x2="674" y2="527.5" stroke="#5470C6" stroke-width="2"/>
<circle cx="660" cy="527.5" r="6.3" fill="#fff" stroke="#5470C6" stroke-width="2"/>
<line x1="818.7" y1="527.5" x2="846.7" y2="527.5" stroke="#91CC75" stroke-width="2"/>
<circle cx="832.7" cy="527.5" r="6.3" fill="#fff" stroke="#91CC75" stroke-width="2"/>
<rect x="352.5" y="817.5" width="961" height="32" rx="3" fill="#fff" stroke="#D2DBEE" stroke-width="1"/>
<path d="M353,843.5 L400,843.2 L460,842 L520,843 L600,842.6 L700,842.3 L760,843 L833,842.8 L900,842.5 L950,841 L987.5,839 L1012,838.8 L1040,834.8 L1120,832.4 L1152,833.6 L1204,832.8 L1232,832.8 L1288,824 L1313,822 L1313,849.5 L353,849.5 Z" fill="#F4F6FB"/>
<path d="M353,843.5 L400,843.2 L460,842 L520,843 L600,842.6 L700,842.3 L760,843 L833,842.8 L900,842.5 L950,841 L987.5,839 L1012,838.8 L1040,834.8 L1120,832.4 L1152,833.6 L1204,832.8 L1232,832.8 L1288,824 L1313,822" fill="none" stroke="#DCE2EF" stroke-width="1"/>
<clipPath id="sel"><rect x="987.5" y="817.5" width="326" height="32.5"/></clipPath>
<rect x="987.5" y="817.5" width="326" height="32.5" fill="#E5EDFC"/>
<path clip-path="url(#sel)" d="M353,843.5 L400,843.2 L460,842 L520,843 L600,842.6 L700,842.3 L760,843 L833,842.8 L900,842.5 L950,841 L987.5,839 L1012,838.8 L1040,834.8 L1120,832.4 L1152,833.6 L1204,832.8 L1232,832.8 L1288,824 L1313,822 L1313.5,850 L352.5,850 Z" fill="#D2E0F9"/>
<path clip-path="url(#sel)" d="M353,843.5 L400,843.2 L460,842 L520,843 L600,842.6 L700,842.3 L760,843 L833,842.8 L900,842.5 L950,841 L987.5,839 L1012,838.8 L1040,834.8 L1120,832.4 L1152,833.6 L1204,832.8 L1232,832.8 L1288,824 L1313,822" fill="none" stroke="#B5CAF2" stroke-width="1"/>
<path d="M987.5,817.5 V811 A2,2 0 0 1 989.5,809 H1311.5 A2,2 0 0 1 1313.5,811 V817.5 Z" fill="#DCE2F0"/>
<path d="M1148.5,811.5 V814.5 M1150.5,811.5 V814.5 M1152.5,811.5 V814.5" stroke="#fff" stroke-width="0.8"/>
<line x1="987.5" y1="817" x2="987.5" y2="850" stroke="#B3C6EA" stroke-width="1"/>
<line x1="1313.5" y1="817" x2="1313.5" y2="850" stroke="#B3C6EA" stroke-width="1"/>
<rect x="985" y="823" width="6.5" height="21" rx="2" fill="#fff" stroke="#ACB8D1" stroke-width="1"/>
<rect x="1310.5" y="823" width="6.5" height="21" rx="2" fill="#fff" stroke="#ACB8D1" stroke-width="1"/></svg>
</body></html>
